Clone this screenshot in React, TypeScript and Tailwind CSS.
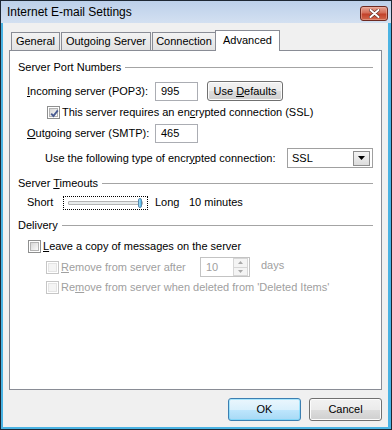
import React from "react";

const F = "font-['Liberation_Sans',Arial,sans-serif]";

function Check({ checked = false, disabled = false }: { checked?: boolean; disabled?: boolean }) {
  return (
    <span
      className={`flex h-[13px] w-[13px] shrink-0 items-center justify-center border bg-white p-px ${
        disabled ? "border-[#c6c6c6]" : "border-[#8e8f8f]"
      }`}
    >
      <span
        className={`relative flex h-full w-full items-center justify-center border ${
          disabled
            ? "border-[#e4e4e4] bg-[#f4f4f4]"
            : "border-[#b3b3b3] bg-[linear-gradient(135deg,#d6d6d6,#fbfbfb)]"
        }`}
      >
        {checked && (
          <svg width="11" height="11" viewBox="0 0 11 11" className="absolute left-[-1px] top-[-1px]">
            <path d="M2.2 5.6 L4.4 8 L8.8 2.4" fill="none" stroke="#4a5c92" strokeWidth="1.9" />
          </svg>
        )}
      </span>
    </span>
  );
}

function Group({ title }: { title: React.ReactNode }) {
  return (
    <div className="flex h-[14px] items-center">
      <span className="leading-[14px]">{title}</span>
      <span className="ml-[4px] h-px flex-1 bg-[#a4a4a4]" />
    </div>
  );
}

function Btn({ children, def = false, w }: { children: React.ReactNode; def?: boolean; w: string }) {
  return (
    <div
      className={`${w} flex items-center justify-center rounded-[3px] border ${
        def
          ? "border-[#3c7fb1] bg-[linear-gradient(#eaf6fd_0%,#d9f0fc_50%,#bee6fd_51%,#a7d9f5_100%)] shadow-[inset_0_0_0_1px_#48d0fc66]"
          : "border-[#707070] bg-[linear-gradient(#f2f2f2_0%,#ebebeb_50%,#dddddd_51%,#cfcfcf_100%)] shadow-[inset_0_0_0_1px_#fcfcfc]"
      } leading-[13px]`}
    >
      <span>{children}</span>
    </div>
  );
}

function Tab({ label, w, selected = false, extra = "" }: { label: string; w: string; selected?: boolean; extra?: string }) {
  return (
    <div
      className={`${w} ${extra} flex items-center justify-center border border-b-0 border-[#898c95] leading-[13px] ${
        selected
          ? "relative z-10 -mb-px h-[21px] bg-white pb-[2px]"
          : "h-[18px] bg-[linear-gradient(#f3f3f3,#e2e2e2)]"
      }`}
    >
      {label}
    </div>
  );
}

export default function App() {
  return (
    <div
      className={`${F} flex h-[430px] w-[392px] flex-col border border-[#1d2733] text-[11px] text-black`}
    >
      {/* Title bar */}
      <div className="flex h-[22px] shrink-0 items-center bg-[linear-gradient(#bcd0ea,#d3e0f1)] pl-[6px] pr-[3px]">
        <span className="flex-1 text-[12px] leading-[14px] text-black">Internet E-mail Settings</span>
        <div className="mt-[2px] flex h-[15px] w-[28px] items-center justify-center rounded-[3px] border border-[#6d2a22] bg-[linear-gradient(#e7a595_0%,#d46d58_45%,#c2412a_55%,#d2694e_100%)] shadow-[inset_0_0_0_1px_#f0b8a880]">
          <svg width="11" height="9" viewBox="0 0 11 9">
            <path d="M1.5 1 L9.5 8 M9.5 1 L1.5 8" stroke="#5a2a22" strokeWidth="3.2" strokeLinecap="round" />
            <path d="M1.5 1 L9.5 8 M9.5 1 L1.5 8" stroke="#ffffff" strokeWidth="2" strokeLinecap="round" />
          </svg>
        </div>
      </div>

      {/* Body with frame */}
      <div className="flex flex-1 flex-col border-b-2 border-l-2 border-r-[3px] border-[#4ab3e3] bg-[#f0f0f0] px-[6px] pt-[7px]">
        {/* Tabs */}
        <div className="flex h-[20px] items-end pl-[2px]">
          <Tab label="General" w="w-[49px]" />
          <Tab label="Outgoing Server" w="w-[90px]" extra="ml-px" />
          <Tab label="Connection" w="w-[64px]" extra="ml-px" />
          <Tab label="Advanced" w="w-[65px]" selected extra="-ml-px" />
        </div>

        {/* Panel */}
        <div className="flex h-[340px] flex-col border border-[#898c95] bg-white px-[8px] pt-[9px]">
          <Group title="Server Port Numbers" />

          <div className="mt-[7px] flex h-[20px] items-center pl-[9px]">
            <span className="w-[128px]">
              <u>I</u>ncoming server (POP3):
            </span>
            <div className="flex h-[19px] w-[43px] items-center border border-[#abadb3] pl-[5px]">995</div>
            <Btn w="ml-[9px] w-[76px] h-[20px]">
              Use <u>D</u>efaults
            </Btn>
          </div>

          <div className="mt-[5px] flex h-[13px] items-center pl-[29px]">
            <Check checked />
            <span className="ml-[2px]">
              This server requires an en<u>c</u>rypted connection (SSL)
            </span>
          </div>

          <div className="mt-[4px] flex h-[20px] items-center pl-[9px]">
            <span className="w-[128px]">
              <u>O</u>utgoing server (SMTP):
            </span>
            <div className="flex h-[19px] w-[43px] items-center border border-[#abadb3] pl-[5px]">465</div>
          </div>

          <div className="mt-[5px] flex h-[20px] items-center pl-[27px]">
            <span>
              Use the following type of encr<u>y</u>pted connection:
            </span>
            <div className="ml-auto flex h-[20px] w-[86px] items-center border border-[#a0a0a0] pl-[4px] pr-[2px]">
              <span className="flex-1">SSL</span>
              <div className="flex h-[15px] w-[17px] items-center justify-center border border-[#8d8d8d] bg-[linear-gradient(#f4f4f4,#dcdcdc)]">
                <svg width="7" height="4" viewBox="0 0 7 4">
                  <path d="M0 0 H7 L3.5 4 Z" fill="#000" />
                </svg>
              </div>
            </div>
          </div>

          <div className="mt-[8px]">
            <Group
              title={
                <>
                  Server <u>T</u>imeouts
                </>
              }
            />
          </div>

          <div className="mt-[5px] flex h-[15px] items-center pl-[9px]">
            <span className="w-[36px]">Short</span>
            <div className="relative flex h-[14px] w-[85px] items-center border border-dotted border-black px-[4px]">
              <div className="h-[4px] flex-1 rounded-[1px] border border-[#b3b3b3] bg-[#e8ebeb]" />
              <div className="absolute left-[74px] top-[1px] h-[10px] w-[4px] rounded-[2px] border border-[#5a8bb0] bg-[linear-gradient(90deg,#a8e2f8,#4ab8e8)]" />
            </div>
            <span className="ml-[7px] w-[34px]">Long</span>
            <span>10 minutes</span>
          </div>

          <div className="mt-[8px]">
            <Group title="Delivery" />
          </div>

          <div className="mt-[8px] flex h-[13px] items-center pl-[10px]">
            <Check />
            <span className="ml-[2px]">
              <u>L</u>eave a copy of messages on the server
            </span>
          </div>

          <div className="mt-[4px] flex h-[20px] items-center pl-[28px] text-[#a0a0a0]">
            <Check disabled />
            <span className="ml-[2px] w-[139px]">
              <u>R</u>emove from server after
            </span>
            <div className="flex h-[20px] w-[50px] items-center border border-[#c3c3c3] bg-white pl-[5px] pr-px">
              <span className="flex-1">10</span>
              <div className="flex h-[18px] w-[15px] flex-col">
                <div className="flex flex-1 items-center justify-center border border-[#d6d6d6] bg-[#f4f4f4]">
                  <svg width="5" height="3" viewBox="0 0 5 3">
                    <path d="M0 3 H5 L2.5 0 Z" fill="#a8a8a8" />
                  </svg>
                </div>
                <div className="flex flex-1 items-center justify-center border border-t-0 border-[#d6d6d6] bg-[#f4f4f4]">
                  <svg width="5" height="3" viewBox="0 0 5 3">
                    <path d="M0 0 H5 L2.5 3 Z" fill="#a8a8a8" />
                  </svg>
                </div>
              </div>
            </div>
            <span className="ml-[11px] -mt-[4px]">days</span>
          </div>

          <div className="mt-[4px] flex h-[13px] items-center pl-[28px] text-[#a0a0a0]">
            <Check disabled />
            <span className="ml-[2px]">
              Re<u>m</u>ove from server when deleted from 'Deleted Items'
            </span>
          </div>
        </div>

        {/* Buttons */}
        <div className="mt-[8px] flex justify-end gap-[8px]">
          <Btn def w="w-[73px] h-[23px]">
            OK
          </Btn>
          <Btn w="w-[73px] h-[23px]">Cancel</Btn>
        </div>
      </div>
    </div>
  );
}
